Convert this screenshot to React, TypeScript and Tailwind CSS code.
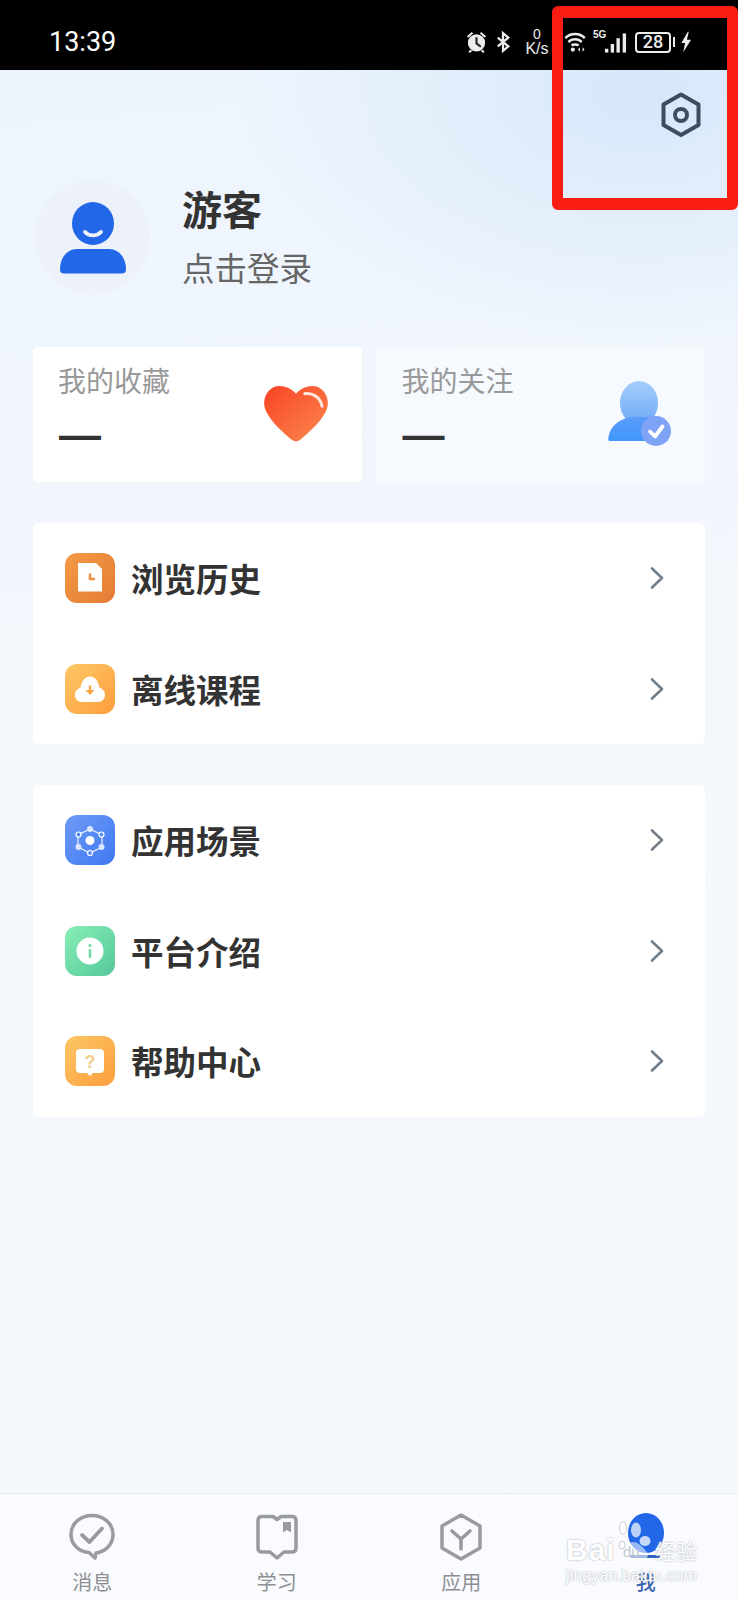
import React from 'react';

const cjk = '"Noto Sans CJK SC", "Liberation Sans", sans-serif';
const latin = '"Liberation Sans", "Noto Sans CJK SC", sans-serif';

const Chevron = () => (
  <svg width="16" height="24" viewBox="0 0 16 24" fill="none" stroke="#727f8b" strokeWidth="2.600" strokeLinecap="round" strokeLinejoin="round">
    <path d="M3 2.500 L13 12 L3 21.500" />
  </svg>
);

const IconHistory = () => (
  <svg width="50" height="50" viewBox="0 0 50 50">
    <defs>
      <linearGradient id="gHist" x1="0" y1="0" x2="1" y2="1">
        <stop offset="0" stopColor="#f39a45" />
        <stop offset="1" stopColor="#e47c36" />
      </linearGradient>
    </defs>
    <rect width="50" height="50" rx="12" fill="url(#gHist)" />
    <path d="M13 10 H31 L37 16 V38.500 H13 Z" fill="#fff" />
    <path d="M25 20.500 V26 H30" fill="none" stroke="#ee8f3f" strokeWidth="2.400" />
  </svg>
);

const IconOffline = () => (
  <svg width="50" height="50" viewBox="0 0 50 50">
    <defs>
      <linearGradient id="gOff" x1="0" y1="0" x2="1" y2="1">
        <stop offset="0" stopColor="#fdc765" />
        <stop offset="1" stopColor="#fd9d3d" />
      </linearGradient>
    </defs>
    <rect width="50" height="50" rx="12" fill="url(#gOff)" />
    <path d="M17 38 C12.500 38 10 34.500 10 31 C10 27.500 12.500 24.500 15.500 23.800 C16.500 17 20 12.500 25 12.500 C30 12.500 33.500 17 34.500 23.800 C37.500 24.500 40 27.500 40 31 C40 34.500 37.500 38 33 38 Z" fill="#fff" />
    <path d="M25 21.500 V28" stroke="#fba545" strokeWidth="2.400" />
    <path d="M20.500 26 L25 31 L29.500 26 Z" fill="#fba545" />
  </svg>
);

const IconScene = () => (
  <svg width="50" height="50" viewBox="0 0 50 50">
    <defs>
      <linearGradient id="gScene" x1="0" y1="0" x2="1" y2="1">
        <stop offset="0" stopColor="#6e9bf7" />
        <stop offset="1" stopColor="#3f78f2" />
      </linearGradient>
    </defs>
    <rect width="50" height="50" rx="12" fill="url(#gScene)" />
    <path d="M25 14 L37 20 V32 L25 38 L13 32 V20 Z" fill="none" stroke="#fff" strokeWidth="1.300" opacity="0.850" />
    <circle cx="25" cy="25.500" r="4.500" fill="#fff" />
    <circle cx="25" cy="14" r="3" fill="#dbe7ff" />
    <circle cx="13.500" cy="32" r="3" fill="#dbe7ff" />
    <circle cx="36.500" cy="32" r="3" fill="#dbe7ff" />
    <circle cx="13.500" cy="19.500" r="2.500" fill="#5b8cf5" stroke="#fff" strokeWidth="1.200" />
    <circle cx="36.500" cy="19.500" r="2.500" fill="#5b8cf5" stroke="#fff" strokeWidth="1.200" />
    <circle cx="25" cy="38" r="2.500" fill="#5b8cf5" stroke="#fff" strokeWidth="1.200" />
  </svg>
);

const IconInfo = () => (
  <svg width="50" height="50" viewBox="0 0 50 50">
    <defs>
      <linearGradient id="gInfo" x1="0" y1="0" x2="1" y2="1">
        <stop offset="0" stopColor="#86efb4" />
        <stop offset="1" stopColor="#56c79b" />
      </linearGradient>
    </defs>
    <rect width="50" height="50" rx="12" fill="url(#gInfo)" />
    <circle cx="25" cy="25" r="13.500" fill="#fff" />
    <circle cx="25" cy="19.500" r="1.600" fill="#73dcab" />
    <rect x="23.700" y="23" width="2.600" height="9" rx="1" fill="#73dcab" />
  </svg>
);

const IconHelp = () => (
  <svg width="50" height="50" viewBox="0 0 50 50">
    <defs>
      <linearGradient id="gHelp" x1="0" y1="0" x2="1" y2="1">
        <stop offset="0" stopColor="#fdc765" />
        <stop offset="1" stopColor="#fd9d3d" />
      </linearGradient>
    </defs>
    <rect width="50" height="50" rx="12" fill="url(#gHelp)" />
    <path d="M15 13 H35 C37.500 13 39 14.500 39 17 V33 C39 35.500 37.500 37 35 37 H28 L25 40 L22 37 H15 C12.500 37 11 35.500 11 33 V17 C11 14.500 12.500 13 15 13 Z" fill="#fff" />
    <text x="25" y="32" textAnchor="middle" fontSize="18" fontWeight="700" fill="#f3cb8a" fontFamily='"Liberation Sans", sans-serif'>?</text>
  </svg>
);

const TabMessage = () => (
  <svg width="46" height="48" viewBox="0 0 46 48" fill="none" stroke="#999b9f" strokeWidth="3.500">
    <path d="M27 40 C37 38.500 44 31 44 21.500 C44 10.500 34.500 2.500 23 2.500 C11.500 2.500 2 10.500 2 21.500 C2 31.500 10 39 20 39.500 L26 45 Z" strokeLinejoin="round" />
    <path d="M13 22 L20.500 29 L33 15.500" strokeWidth="3.800" strokeLinecap="round" strokeLinejoin="round" />
  </svg>
);

const TabStudy = () => (
  <svg width="42" height="48" viewBox="0 0 42 48" fill="none" stroke="#999b9f" strokeWidth="3.500">
    <path d="M6 3.500 H17 L21 6.500 L25 3.500 H36 C38.500 3.500 40 5 40 7.500 V35 C40 37.500 38.500 39 36 39 H28 L21 45 L14 39 H6 C3.500 39 2 37.500 2 35 V7.500 C2 5 3.500 3.500 6 3.500 Z" strokeLinejoin="round" />
    <path d="M27 9 H35 V19.500 L31 17 L27 19.500 Z" fill="#999b9f" stroke="none" />
  </svg>
);

const TabApp = () => (
  <svg width="42" height="48" viewBox="0 0 42 48" fill="none" stroke="#999b9f" strokeWidth="3.500">
    <path d="M21 2 L40 13 V35 L21 46 L2 35 V13 Z" strokeLinejoin="round" />
    <path d="M12 18 L21 26 L30 18 M21 26 V36" strokeWidth="3.600" strokeLinecap="round" strokeLinejoin="round" />
  </svg>
);

const rows1 = [
  { label: '浏览历史', icon: <IconHistory /> },
  { label: '离线课程', icon: <IconOffline /> },
];

const rows2 = [
  { label: '应用场景', icon: <IconScene /> },
  { label: '平台介绍', icon: <IconInfo /> },
  { label: '帮助中心', icon: <IconHelp /> },
];

const MenuRow = ({ label, icon }: { label: string; icon: React.ReactNode }) => (
  <div className="flex h-[110.500px] items-center pl-[32px] pr-[40px]">
    {icon}
    <span className="ml-[16px] flex-1 text-[32.500px] leading-none font-bold text-[#333333]">{label}</span>
    <Chevron />
  </div>
);

const tabs = [
  { label: '消息', icon: <TabMessage /> },
  { label: '学习', icon: <TabStudy /> },
  { label: '应用', icon: <TabApp /> },
];

export default function App() {
  return (
    <div
      className="relative h-[1600px] w-[738px] overflow-hidden bg-[radial-gradient(ellipse_400px_260px_at_640px_90px,#d6e7fa_0%,#e2eefb_45%,rgba(236,244,253,0)_100%),linear-gradient(175deg,#ecf4fd_0%,#eef5fd_12%,#f1f6fd_25%,#f4f7fc_42%,#f5f8fc_100%)]"
      style={{ fontFamily: cjk }}
    >
      {/* status bar */}
      <div className="flex h-[70px] items-center bg-black pt-[14px] pr-[46px] pl-[49px] text-white">
        <span className="text-[27px] leading-none font-normal" style={{ fontFamily: 'Roboto, sans-serif' }}>13:39</span>
        <div className="ml-auto flex items-center">
          <svg width="23" height="24" viewBox="0 0 24 24" fill="#ececec">
            <circle cx="12" cy="13" r="9" />
            <path d="M2 6 L7 1.500 L8.500 3 L3.500 7.500 Z M22 6 L17 1.500 L15.500 3 L20.500 7.500 Z M5 20 L3.500 23 H6 L7.500 21 Z M19 20 L20.500 23 H18 L16.500 21 Z" />
            <path d="M12 7 V13.500 L16.500 17" fill="none" stroke="#222" strokeWidth="2.200" />
          </svg>
          <svg className="ml-[8px]" width="14" height="24" viewBox="0 0 16 24" fill="none" stroke="#ececec" strokeWidth="2.600">
            <path d="M2 7 L14 17 L8 22 V2 L14 7 L2 17" />
          </svg>
          <div className="ml-[15px] flex w-[24px] flex-col items-center text-[#ececec]" style={{ fontFamily: latin }}>
            <span className="text-[14px] leading-[13px]">0</span>
            <span className="text-[16px] leading-[15px]">K/s</span>
          </div>
          <svg className="ml-[15px]" width="23" height="24" viewBox="0 0 26 24" fill="none" stroke="#ececec" strokeWidth="2.800">
            <path d="M1.500 7.500 C7.500 1.500 17.500 1.500 23.500 7.500 M5 12 C9 8 16 8 20 12 M8.500 16 C10.500 14.500 14.500 14.500 16.500 16" />
            <circle cx="10" cy="20.500" r="2.400" fill="#ececec" stroke="none" />
            <path d="M18 18 V23 L15.800 20.500 Z M21 18 V23 L23.200 20.500 Z" fill="#ececec" stroke="none" />
          </svg>
          <div className="relative ml-[6px] h-[26px] w-[34px]">
            <span className="absolute top-0 left-0 text-[10px] leading-[12px] font-bold text-[#ececec]" style={{ fontFamily: latin }}>5G</span>
            <svg className="absolute top-[3px] left-[11px]" width="23" height="22" viewBox="0 0 24 22" fill="#ececec">
              <rect x="1" y="17" width="3.500" height="4" />
              <rect x="7" y="12" width="3.500" height="9" />
              <rect x="13" y="6" width="3.500" height="15" />
              <rect x="19.500" y="1" width="3.500" height="20" />
            </svg>
          </div>
          <div className="ml-[8px] flex h-[21px] w-[36px] items-center justify-center rounded-[4px] border-2 border-[#ececec] text-[18px] leading-none font-medium text-[#ececec]" style={{ fontFamily: 'Roboto, sans-serif' }}>28</div>
          <div className="ml-[2px] h-[10px] w-[2px] bg-[#ececec]" />
          <svg className="ml-[5px]" width="12" height="24" viewBox="0 0 13 24" fill="#ececec">
            <path d="M8.500 1 L1.500 13 H5.500 L3.500 23 L12 9.500 H7.500 L9.500 1 Z" />
          </svg>
        </div>
      </div>

      {/* settings */}
      <div className="flex h-[90px] items-center justify-end pr-[37px]">
        <svg width="40" height="46" viewBox="0 0 40 46" fill="none" stroke="#3a4e5f" strokeWidth="4" strokeLinejoin="round">
          <path d="M20 2.500 L37.500 12.500 V33 L20 43 L2.500 33 V12.500 Z" />
          <circle cx="20" cy="23" r="6" />
        </svg>
      </div>

      {/* profile */}
      <div className="mt-[20px] ml-[35px] flex h-[115px] items-center">
        <div className="flex h-[115px] w-[115px] items-center justify-center rounded-full bg-[#edf2fa]">
          <svg width="68" height="72" viewBox="0 0 68 72">
            <ellipse cx="34" cy="21.500" rx="21" ry="21.500" fill="#2167e8" />
            <path d="M26 30 C30 34.500 38 34.500 42 30" fill="none" stroke="#edf2fa" strokeWidth="3.800" strokeLinecap="round" />
            <path d="M18 47 H50 C60 47 67 56 67 67 C67 70 66 71.500 63 71.500 H5 C2 71.500 1 70 1 67 C1 56 8 47 18 47 Z" fill="#2167e8" />
          </svg>
        </div>
        <div className="ml-[32px] flex flex-col">
          <span className="text-[40px] leading-[46px] font-bold text-[#333333]">游客</span>
          <span className="mt-[13px] text-[32.500px] leading-[46px] text-[#666666]">点击登录</span>
        </div>
      </div>

      {/* favourites and follows */}
      <div className="mt-[52px] flex gap-[14px] px-[33px]">
        <div className="relative h-[135px] flex-1 rounded-[4px] bg-white pt-[16px] pl-[25px]">
          <div className="text-[28px] leading-[34px] text-[#999999]">我的收藏</div>
          <div className="mt-[14px] ml-[1px] text-[42px] leading-[48px] font-bold text-[#333333]" style={{ fontFamily: latin }}>—</div>
          <svg className="absolute top-[39px] right-[33px]" width="66" height="56" viewBox="0 0 66 58">
            <defs>
              <linearGradient id="gHeart" x1="0" y1="0" x2="1" y2="1">
                <stop offset="0.100" stopColor="#fa4a28" />
                <stop offset="1" stopColor="#fa8a50" />
              </linearGradient>
            </defs>
            <path d="M33 8 C29 3 22 0 16 0 C7 0 0 8 0 18 C0 32 22 50 29 56 C31.500 58 34.500 58 37 56 C44 50 66 32 66 18 C66 8 59 0 50 0 C44 0 37 3 33 8 Z" fill="url(#gHeart)" />
            <path d="M42 8 C50 7 58 11 60 21" fill="none" stroke="#ffe9dd" strokeWidth="3" strokeLinecap="round" />
          </svg>
        </div>
        <div className="relative h-[135px] flex-1 rounded-[4px] bg-[#f6faff] pt-[16px] pl-[26px]">
          <div className="text-[28px] leading-[34px] text-[#999999]">我的关注</div>
          <div className="mt-[14px] ml-[1px] text-[42px] leading-[48px] font-bold text-[#333333]" style={{ fontFamily: latin }}>—</div>
          <svg className="absolute top-[34px] right-[34px]" width="63" height="65" viewBox="0 0 63 65">
            <defs>
              <linearGradient id="gHead" x1="0" y1="0" x2="0" y2="1">
                <stop offset="0" stopColor="#a4cdfb" />
                <stop offset="1" stopColor="#6fa9f8" />
              </linearGradient>
              <linearGradient id="gBody" x1="0" y1="0" x2="0" y2="1">
                <stop offset="0" stopColor="#5a9cf9" />
                <stop offset="1" stopColor="#3f97fb" />
              </linearGradient>
            </defs>
            <ellipse cx="31" cy="22" rx="19" ry="22" fill="url(#gHead)" />
            <path d="M16 38 C20 35 42 35 46 38 C56 41 60 50 60 60 H2 C0 60 0 58 0.500 56 C2 47 8 41 16 38 Z" fill="url(#gBody)" />
            <circle cx="48" cy="50" r="15" fill="#7ea3f6" />
            <path d="M42 50.500 L47 55.500 L54.500 45.500" fill="none" stroke="#fff" strokeWidth="3.800" strokeLinecap="round" strokeLinejoin="round" />
          </svg>
        </div>
      </div>

      {/* menus */}
      <div className="mx-[33px] mt-[41px] rounded-[6px] bg-white">
        {rows1.map((r) => (
          <MenuRow key={r.label} label={r.label} icon={r.icon} />
        ))}
      </div>
      <div className="mx-[33px] mt-[41px] rounded-[6px] bg-white">
        {rows2.map((r) => (
          <MenuRow key={r.label} label={r.label} icon={r.icon} />
        ))}
      </div>

      {/* tab bar */}
      <div className="absolute right-0 bottom-0 left-0 grid h-[107px] grid-cols-4 border-t border-[#e6e9ee] bg-[#f9fbff]">
        {tabs.map((t) => (
          <div key={t.label} className="flex flex-col items-center pt-[19px]">
            <div className="flex h-[48px] items-center">{t.icon}</div>
            <span className="mt-[7px] text-[20px] leading-[28px] text-[#8d8f93]">{t.label}</span>
          </div>
        ))}
        <div className="flex flex-col items-center pt-[19px]">
          <svg width="40" height="48" viewBox="0 0 40 48">
            <ellipse cx="20" cy="20" rx="18" ry="20" fill="#2167e8" />
            <rect x="4" y="42" width="30" height="3" rx="1.500" fill="#2c62c0" />
          </svg>
          <span className="mt-[7px] text-[20px] leading-[28px] font-medium text-[#3a65ad]">我</span>
        </div>
      </div>

      {/* baidu watermark */}
      <div className="absolute top-[1518px] left-[566px] flex w-[131px] flex-col text-white">
        <svg className="absolute top-0 left-[52px]" width="42" height="44" viewBox="0 0 42 44">
          <ellipse cx="5" cy="10" rx="3.500" ry="6.500" fill="#fff" stroke="#c9ccd3" strokeWidth="1" />
          <ellipse cx="18" cy="12" rx="5" ry="7.500" fill="#fff" opacity="0.700" />
          <ellipse cx="27" cy="23" rx="5.500" ry="5" fill="#fff" opacity="0.750" />
          <ellipse cx="4" cy="27" rx="3" ry="4" fill="#fff" stroke="#c9ccd3" strokeWidth="1" />
          <path d="M15 24 C21 24 28 32 30 36 C31 41 25 42 18 41 C10 42 4 41 5 36 C7 32 10 24 15 24 Z" fill="#fff" opacity="0.550" />
        </svg>
        <div className="relative mt-[17px] flex justify-between">
          <span className="text-[30px] leading-[30px] font-bold tracking-[1px] [text-shadow:0_0_2px_#9aa0aa]" style={{ fontFamily: latin }}>Bai</span>
          <span className="absolute top-[8px] left-[57px] text-[15px] leading-[18px] text-[#c4c7cd]" style={{ fontFamily: latin }}>du</span>
          <span className="text-[21px] leading-[30px] [text-shadow:0_0_2px_#9aa0aa]">经验</span>
        </div>
        <span className="mt-[1px] text-[16px] leading-[20px] tracking-[0.100px] [text-shadow:0_0_2px_#9aa0aa]" style={{ fontFamily: latin }}>jingyan.baidu.com</span>
      </div>

      {/* red highlight frame */}
      <div className="absolute top-[6px] left-[552px] h-[204px] w-[186px] rounded-[6px] border-x-[11px] border-t-[12px] border-b-[12px] border-[#fb1d14]" />
    </div>
  );
}
